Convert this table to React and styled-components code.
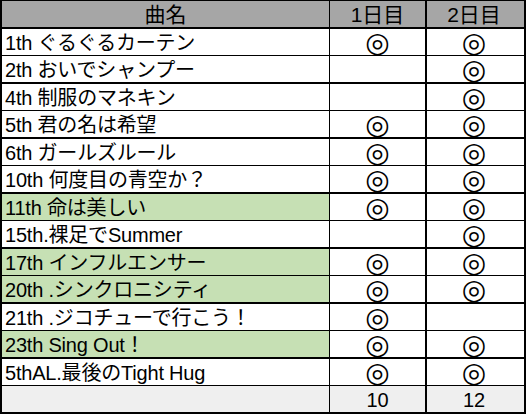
import React from 'react';
import styled, { createGlobalStyle } from 'styled-components';

const GlobalStyle = createGlobalStyle`
  html, body {
    margin: 0;
    padding: 0;
    background: #ffffff;
  }
`;

const Sheet = styled.div`
  width: 526px;
  box-sizing: border-box;
  border-left: 2px solid #000;
  border-right: 2px solid #000;
  border-top: 1px solid #000;
  font-family: "Liberation Sans", "Noto Sans CJK JP", sans-serif;
  font-size: 20px;
  color: #000;
`;

const Row = styled.div`
  display: grid;
  grid-template-columns: 328px 97px 94px;
  height: ${props => props.$height}px;
  border-bottom: ${props => props.$line}px solid #000;
`;

const Cell = styled.div`
  display: flex;
  align-items: center;
  justify-content: ${props => (props.$left ? 'flex-start' : 'center')};
  padding-left: ${props => (props.$left ? '3px' : '0')};
  padding-top: 1px;
  box-sizing: border-box;
  height: 100%;
  line-height: 1;
  white-space: nowrap;
  overflow: hidden;
  background: ${props => props.$bg || 'transparent'};
  border-right: ${props => props.$rule || 0}px solid #000;
  letter-spacing: ${props => (props.$left ? '-0.2px' : '0')};
`;

const HeaderRow = styled(Row)`
  background: #a6a6a6;
  font-size: 21px;
`;

const TotalRow = styled(Row)`
  background: #efefef;
`;

const Mark = styled.span`
  font-family: "DejaVu Sans", sans-serif;
  font-size: 28px;
  line-height: 22px;
  height: 22px;
  display: inline-block;
`;

const songs = [
  { title: '1th ぐるぐるカーテン', d1: true, d2: true },
  { title: '2th おいでシャンプー', d1: false, d2: true },
  { title: '4th 制服のマネキン', d1: false, d2: true },
  { title: '5th 君の名は希望', d1: true, d2: true },
  { title: '6th ガールズルール', d1: true, d2: true },
  { title: '10th 何度目の青空か？', d1: true, d2: true },
  { title: '11th 命は美しい', d1: true, d2: true, green: true },
  { title: '15th.裸足でSummer', d1: false, d2: true },
  { title: '17th インフルエンサー', d1: true, d2: true, green: true },
  { title: '20th .シンクロニシティ', d1: true, d2: true, green: true },
  { title: '21th .ジコチューで行こう！', d1: true, d2: false },
  { title: '23th Sing Out！', d1: true, d2: true, green: true },
  { title: '5thAL.最後のTight Hug', d1: true, d2: true },
];

const App = () => {
  const total1 = songs.filter(s => s.d1).length;
  const total2 = songs.filter(s => s.d2).length;

  return (
    <>
      <GlobalStyle />
      <Sheet>
        <HeaderRow $height={26} $line={2}>
          <Cell $rule={1}>曲名</Cell>
          <Cell $rule={2}>1日目</Cell>
          <Cell>2日目</Cell>
        </HeaderRow>
        {songs.map((song, i) => (
          <Row key={song.title} $height={26} $line={i % 2 === 0 ? 1 : 2}>
            <Cell $left $rule={1} $bg={song.green ? '#c6e0b4' : null}>
              {song.title}
            </Cell>
            <Cell $rule={2}>{song.d1 && <Mark>◎</Mark>}</Cell>
            <Cell>{song.d2 && <Mark>◎</Mark>}</Cell>
          </Row>
        ))}
        <TotalRow $height={26} $line={2}>
          <Cell $rule={1} />
          <Cell $rule={2}>{total1}</Cell>
          <Cell>{total2}</Cell>
        </TotalRow>
      </Sheet>
    </>
  );
};

export default App;
